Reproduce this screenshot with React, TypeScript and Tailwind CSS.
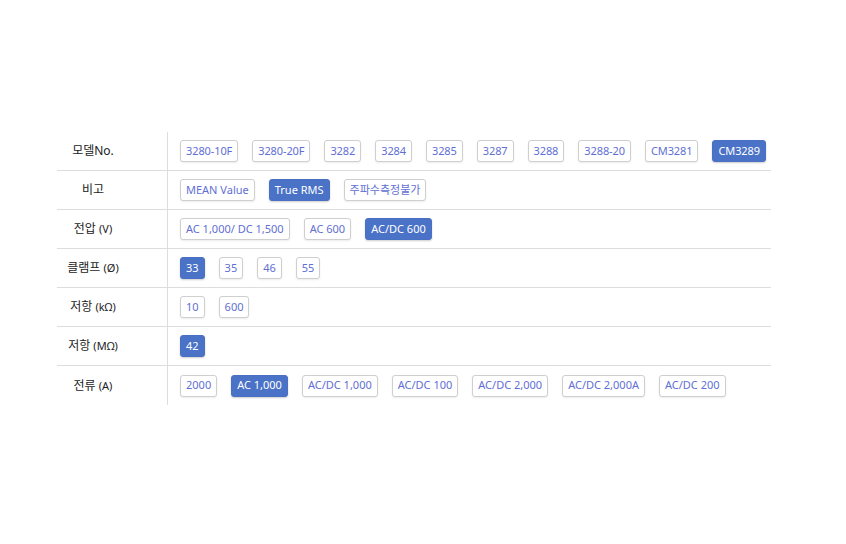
import React from 'react';

interface Row {
  label: React.ReactNode;
  options: string[];
  active: string;
  tight?: boolean;
}

const ROWS: Row[] = [
  {
    label: '모델No.',
    options: ['3280-10F', '3280-20F', '3282', '3284', '3285', '3287', '3288', '3288-20', 'CM3281', 'CM3289'],
    active: 'CM3289',
    tight: true,
  },
  { label: '비고', options: ['MEAN Value', 'True RMS', '주파수측정불가'], active: 'True RMS' },
  {
    label: (
      <>
        전압 <span className="text-[11px]">(V)</span>
      </>
    ),
    options: ['AC 1,000/ DC 1,500', 'AC 600', 'AC/DC 600'],
    active: 'AC/DC 600',
  },
  {
    label: (
      <>
        클램프 <span className="text-[11px]">(Ø)</span>
      </>
    ),
    options: ['33', '35', '46', '55'],
    active: '33',
  },
  {
    label: (
      <>
        저항 <span className="text-[11px]">(kΩ)</span>
      </>
    ),
    options: ['10', '600'],
    active: '',
  },
  {
    label: (
      <>
        저항 <span className="text-[11px]">(MΩ)</span>
      </>
    ),
    options: ['42'],
    active: '42',
  },
  {
    label: (
      <>
        전류 <span className="text-[11px]">(A)</span>
      </>
    ),
    options: ['2000', 'AC 1,000', 'AC/DC 1,000', 'AC/DC 100', 'AC/DC 2,000', 'AC/DC 2,000A', 'AC/DC 200'],
    active: 'AC 1,000',
  },
];

function Chip({ text, active, tight }: { text: string; active: boolean; tight?: boolean }) {
  const base = `shrink-0 whitespace-nowrap h-[22px] px-[5px] flex items-center rounded-[3px] border text-[11px] ${
    tight ? 'tracking-[-0.1px]' : ''
  }`;
  return (
    <span
      className={
        active
          ? `${base} border-[#4a70c4] bg-[#4a72c6] text-white shadow-[0_1px_2px_rgba(0,0,0,0.2)]`
          : `${base} border-[#cfcfcf] bg-white text-[#5f6fd4] shadow-[0_1px_2px_rgba(0,0,0,0.08)]`
      }
    >
      {text}
    </span>
  );
}

export default function App() {
  return (
    <div
      className="w-[846px] h-[544px] bg-white pt-[132px] pl-[57px]"
      style={{ fontFamily: '"Noto Sans", "Noto Sans CJK KR", sans-serif' }}
    >
      <div className="w-[714px]">
        {ROWS.map((row, i) => (
          <div
            key={i}
            className={`flex h-[39px] ${i < ROWS.length - 1 ? 'border-b border-[#dddddd]' : ''}`}
          >
            <div className="w-[111px] shrink-0 pr-[38px] flex items-center justify-center text-[12px] text-[#222] border-r border-[#dddddd]">
              <span className="whitespace-nowrap">{row.label}</span>
            </div>
            <div className="flex-1 flex items-center gap-[14px] pl-[12px]">
              {row.options.map((o) => (
                <Chip key={o} text={o} active={o === row.active} tight={row.tight} />
              ))}
            </div>
          </div>
        ))}
      </div>
    </div>
  );
}
